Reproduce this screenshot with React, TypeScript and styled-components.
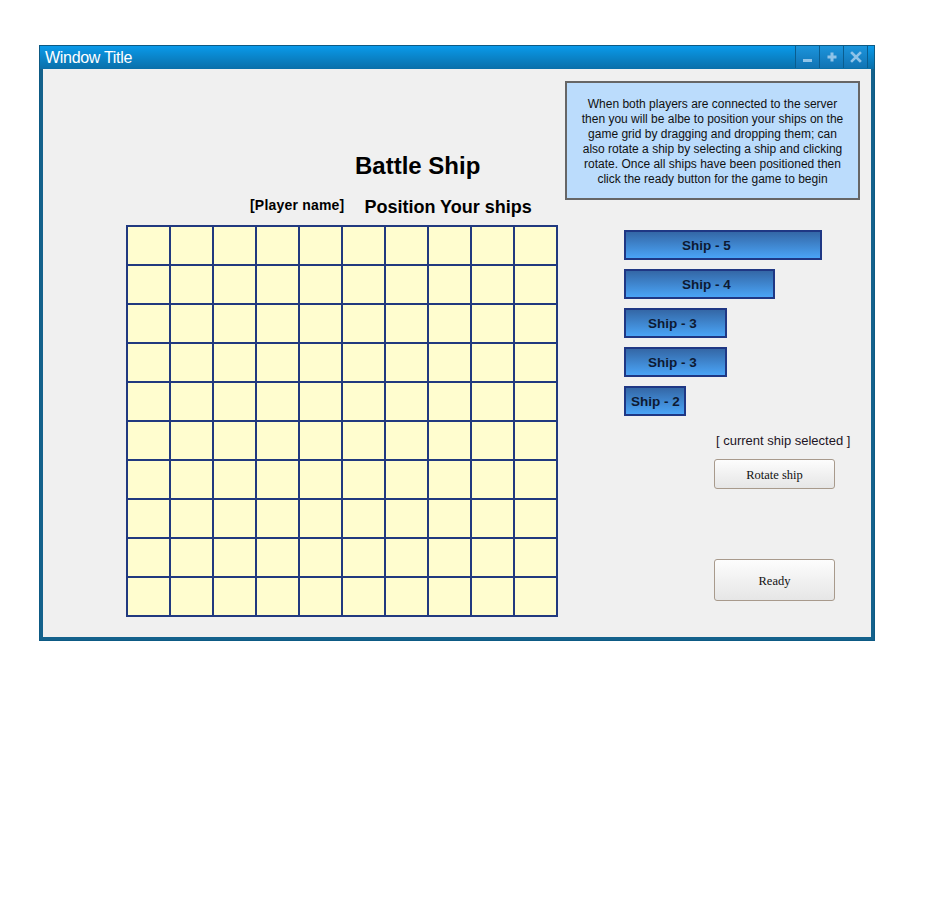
import React, { FC } from "react";
import styled, { createGlobalStyle } from "styled-components";

const GlobalStyle = createGlobalStyle`
  body {
    margin: 0;
    background: #ffffff;
    font-family: "Liberation Sans", Arial, sans-serif;
  }
`;

type Ship = { label: string; width: number; inset: number };

const SHIPS: Ship[] = [
  { label: "Ship - 5", width: 198, inset: 56 },
  { label: "Ship - 4", width: 151, inset: 56 },
  { label: "Ship - 3", width: 103, inset: 22 },
  { label: "Ship - 3", width: 103, inset: 22 },
  { label: "Ship - 2", width: 62, inset: 5 },
];

const INFO_LINES = [
  "When both players are connected to the server",
  "then you will be albe to position your ships on the",
  "game grid by dragging and dropping them; can",
  "also rotate a ship by selecting a ship and clicking",
  "rotate. Once all ships have been positioned then",
  "click the ready button for the game to begin",
];

const TitleIcon: FC<{ kind: "min" | "max" | "close" }> = ({ kind }) => (
  <svg width="12" height="12" viewBox="0 0 12 12">
    {kind === "min" && <rect x="1" y="8" width="9" height="3" fill="#8fc3e8" />}
    {kind === "max" && (
      <path d="M4.5 1.5h3v3h3v3h-3v3h-3v-3h-3v-3h3z" fill="#8fc3e8" />
    )}
    {kind === "close" && (
      <path
        d="M2 2l8 8M10 2l-8 8"
        stroke="#8fc3e8"
        strokeWidth="2.6"
        strokeLinecap="square"
      />
    )}
  </svg>
);

const App: FC = () => {
  const cells = Array.from({ length: 100 }, (_, i) => i);
  return (
    <>
      <GlobalStyle />
      <Window>
        <TitleBar>
          <span>Window Title</span>
          <TitleButtons>
            <TitleButton>
              <TitleIcon kind="min" />
            </TitleButton>
            <TitleButton>
              <TitleIcon kind="max" />
            </TitleButton>
            <TitleButton>
              <TitleIcon kind="close" />
            </TitleButton>
          </TitleButtons>
        </TitleBar>

        <Content>
          <LeftColumn>
            <GameTitle>Battle Ship</GameTitle>
            <PlayerRow>
              <PlayerName>[Player name]</PlayerName>
              <SubTitle>Position Your ships</SubTitle>
            </PlayerRow>
            <Board>
              {cells.map((c) => (
                <Cell key={c} />
              ))}
            </Board>
          </LeftColumn>

          <RightColumn>
            <InfoBox>
              {INFO_LINES.map((line, idx) => (
                <div key={idx}>{line}</div>
              ))}
            </InfoBox>

            <ShipList>
              {SHIPS.map((ship, idx) => (
                <ShipBar key={idx} $width={ship.width} $inset={ship.inset}>
                  {ship.label}
                </ShipBar>
              ))}
            </ShipList>

            <Controls>
              <Selected>[ current ship selected ]</Selected>
              <ActionButton $height={30}>Rotate ship</ActionButton>
              <ActionButton $height={42} $gap={70}>
                Ready
              </ActionButton>
            </Controls>
          </RightColumn>
        </Content>
      </Window>
    </>
  );
};

const Window = styled.div`
  margin: 45px 0 0 39px;
  width: 834px;
  border: 1px solid #0d5a84;
  background: #14628c;
  display: flex;
  flex-direction: column;
`;

const TitleBar = styled.div`
  height: 23px;
  display: flex;
  justify-content: space-between;
  align-items: flex-start;
  padding: 0 6px 0 5px;
  background: linear-gradient(#0a9aea, #0a86cc 45%, #0a6fa9);
  color: #ffffff;
  font-size: 16px;
  line-height: 24px;

  span {
    letter-spacing: -0.3px;
  }
`;

const TitleButtons = styled.div`
  display: flex;
  height: 22px;
  border-right: 1px solid #0a5d8f;
`;

const TitleButton = styled.div`
  width: 23px;
  height: 22px;
  display: flex;
  align-items: center;
  justify-content: center;
  border-left: 1px solid #0a5d8f;
  background: linear-gradient(#1c95dc, #1580c4 60%, #1174b3);
`;

const Content = styled.div`
  margin: 0 3px 3px 3px;
  height: 568px;
  box-sizing: border-box;
  background: #f0f0f0;
  padding: 12px 0 0 83px;
  display: flex;
  align-items: flex-start;
`;

const LeftColumn = styled.div`
  display: flex;
  flex-direction: column;
  width: 432px;
`;

const GameTitle = styled.h1`
  margin: 71px 0 0 0;
  padding-left: 229px;
  font-size: 24px;
  line-height: 28px;
  font-weight: bold;
  color: #000;
`;

const PlayerRow = styled.div`
  display: flex;
  align-items: flex-end;
  gap: 20px;
  margin-top: 16px;
  padding-left: 124px;
  font-weight: bold;
  color: #000;
`;

const PlayerName = styled.div`
  font-size: 14px;
  line-height: 18px;
  padding-bottom: 4px;
  letter-spacing: 0.2px;
`;

const SubTitle = styled.div`
  font-size: 18px;
  line-height: 22px;
`;

const Board = styled.div`
  margin-top: 7px;
  display: grid;
  grid-template-columns: repeat(10, 41px);
  grid-template-rows: repeat(10, 37px);
  gap: 2px;
  padding: 2px;
  width: fit-content;
  background: #21397f;
`;

const Cell = styled.div`
  background: #fffdcf;
`;

const RightColumn = styled.div`
  margin-left: 7px;
  display: flex;
  flex-direction: column;
`;

const InfoBox = styled.div`
  width: 295px;
  height: 119px;
  box-sizing: border-box;
  border: 2px solid #666666;
  padding-top: 2px;
  background: #bbdcfc;
  display: flex;
  flex-direction: column;
  justify-content: center;
  align-items: center;
  font-size: 12px;
  line-height: 15px;
  color: #111;
  white-space: nowrap;
`;

const ShipList = styled.div`
  margin: 30px 0 0 59px;
  display: flex;
  flex-direction: column;
  gap: 9px;
`;

const ShipBar = styled.div<{ $width: number; $inset: number }>`
  width: ${(p) => p.$width}px;
  height: 30px;
  box-sizing: border-box;
  border: 2px solid #1f3784;
  background: linear-gradient(#3467a6, #4aa4f6);
  padding-left: ${(p) => p.$inset}px;
  font-size: 13.5px;
  font-weight: bold;
  line-height: 27px;
  color: #0d1a33;
`;

const Controls = styled.div`
  margin: 17px 0 0 149px;
  display: flex;
  flex-direction: column;
  align-items: flex-start;
`;

const Selected = styled.div`
  padding-left: 2px;
  font-size: 13px;
  line-height: 16px;
  color: #1c1424;
`;

const ActionButton = styled.button<{ $height: number; $gap?: number }>`
  margin-top: ${(p) => p.$gap ?? 10}px;
  width: 121px;
  height: ${(p) => p.$height}px;
  border: 1px solid #a89a8c;
  border-radius: 3px;
  background: linear-gradient(#fdfdfd, #f1f1f1 50%, #e6e6e6);
  font-family: "Liberation Serif", "Times New Roman", serif;
  font-size: 12.5px;
  color: #111;
  padding: 2px 0 0 0;
`;

export default App;
